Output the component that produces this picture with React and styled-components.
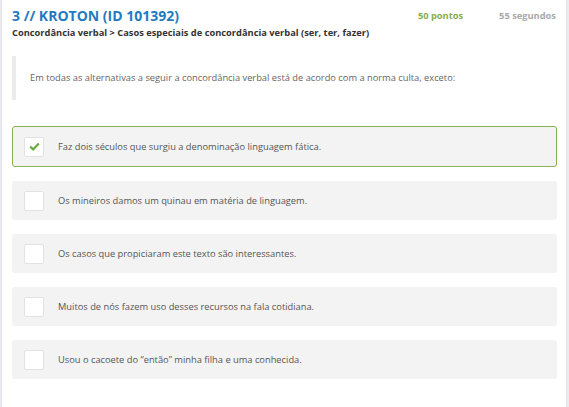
import styled, { createGlobalStyle } from "styled-components";

const GlobalStyle = createGlobalStyle`
  html, body {
    margin: 0;
    padding: 0;
    background: #ececf0;
  }
  body {
    font-family: "Open Sans", "Liberation Sans", sans-serif;
  }
`;

const Card = styled.div`
  box-sizing: border-box;
  width: 566px;
  min-height: 407px;
  margin-left: 1px;
  background: #fff;
  border-left: 1px solid #e2e2ea;
  border-right: 1px solid #e2e2ea;
  padding: 6px 9px 0 10px;
`;

const Header = styled.div`
  display: flex;
  justify-content: space-between;
  align-items: flex-start;
`;

const Title = styled.h1`
  margin: 0;
  font-size: 14px;
  line-height: 20px;
  font-weight: 700;
  color: #1f7bc1;
`;

const Breadcrumb = styled.div`
  font-size: 9.3px;
  line-height: 14px;
  font-weight: 700;
  color: #333;
`;

const Stats = styled.div`
  display: flex;
  gap: 36px;
  padding-top: 3px;
  padding-right: 1px;
`;

const Stat = styled.span`
  font-size: 9.3px;
  font-weight: 700;
  color: ${(p) => p.color};
`;

const Quote = styled.blockquote`
  margin: 16px 0 0 0;
  padding: 15px 14px;
  border-left: 4px solid #ebebeb;
  font-size: 9.3px;
  line-height: 14px;
  color: #666;
`;

const Options = styled.div`
  display: flex;
  flex-direction: column;
  gap: 14px;
  margin-top: 26px;
`;

const Option = styled.div`
  box-sizing: border-box;
  display: flex;
  align-items: center;
  gap: 14px;
  height: ${(p) => (p.$selected ? 41 : 39)}px;
  padding: 0 12px;
  background: #f3f3f3;
  border-radius: 3px;
  border: ${(p) => (p.$selected ? "1px solid #86b24f" : "none")};
  padding-left: ${(p) => (p.$selected ? 11 : 12)}px;
  font-size: 9.3px;
  color: #555;
`;

const Box = styled.span`
  box-sizing: border-box;
  flex: none;
  width: 20px;
  height: 20px;
  background: #fff;
  border: 1px solid #e2e2e2;
  border-radius: 2px;
  display: flex;
  align-items: center;
  justify-content: center;
`;

const options = [
  "Faz dois séculos que surgiu a denominação linguagem fática.",
  "Os mineiros damos um quinau em matéria de linguagem.",
  "Os casos que propiciaram este texto são interessantes.",
  "Muitos de nós fazem uso desses recursos na fala cotidiana.",
  "Usou o cacoete do “então” minha filha e uma conhecida.",
];

export default function App() {
  return (
    <>
      <GlobalStyle />
      <Card>
        <Header>
          <div>
            <Title>3 // KROTON (ID 101392)</Title>
            <Breadcrumb>
              Concordância verbal &gt; Casos especiais de concordância verbal (ser, ter, fazer)
            </Breadcrumb>
          </div>
          <Stats>
            <Stat color="#86ad4c">50 pontos</Stat>
            <Stat color="#a9a9a9">55 segundos</Stat>
          </Stats>
        </Header>
        <Quote>
          Em todas as alternativas a seguir a concordância verbal está de acordo com a norma culta, exceto:
        </Quote>
        <Options>
          {options.map((text, i) => (
            <Option key={i} $selected={i === 0}>
              <Box>
                {i === 0 && (
                  <svg width="11" height="9" viewBox="0 0 11 9">
                    <path d="M1.2 4.6 L4.2 7.4 L9.8 1.6" fill="none" stroke="#6aac3a" strokeWidth="2.2" />
                  </svg>
                )}
              </Box>
              {text}
            </Option>
          ))}
        </Options>
      </Card>
    </>
  );
}
